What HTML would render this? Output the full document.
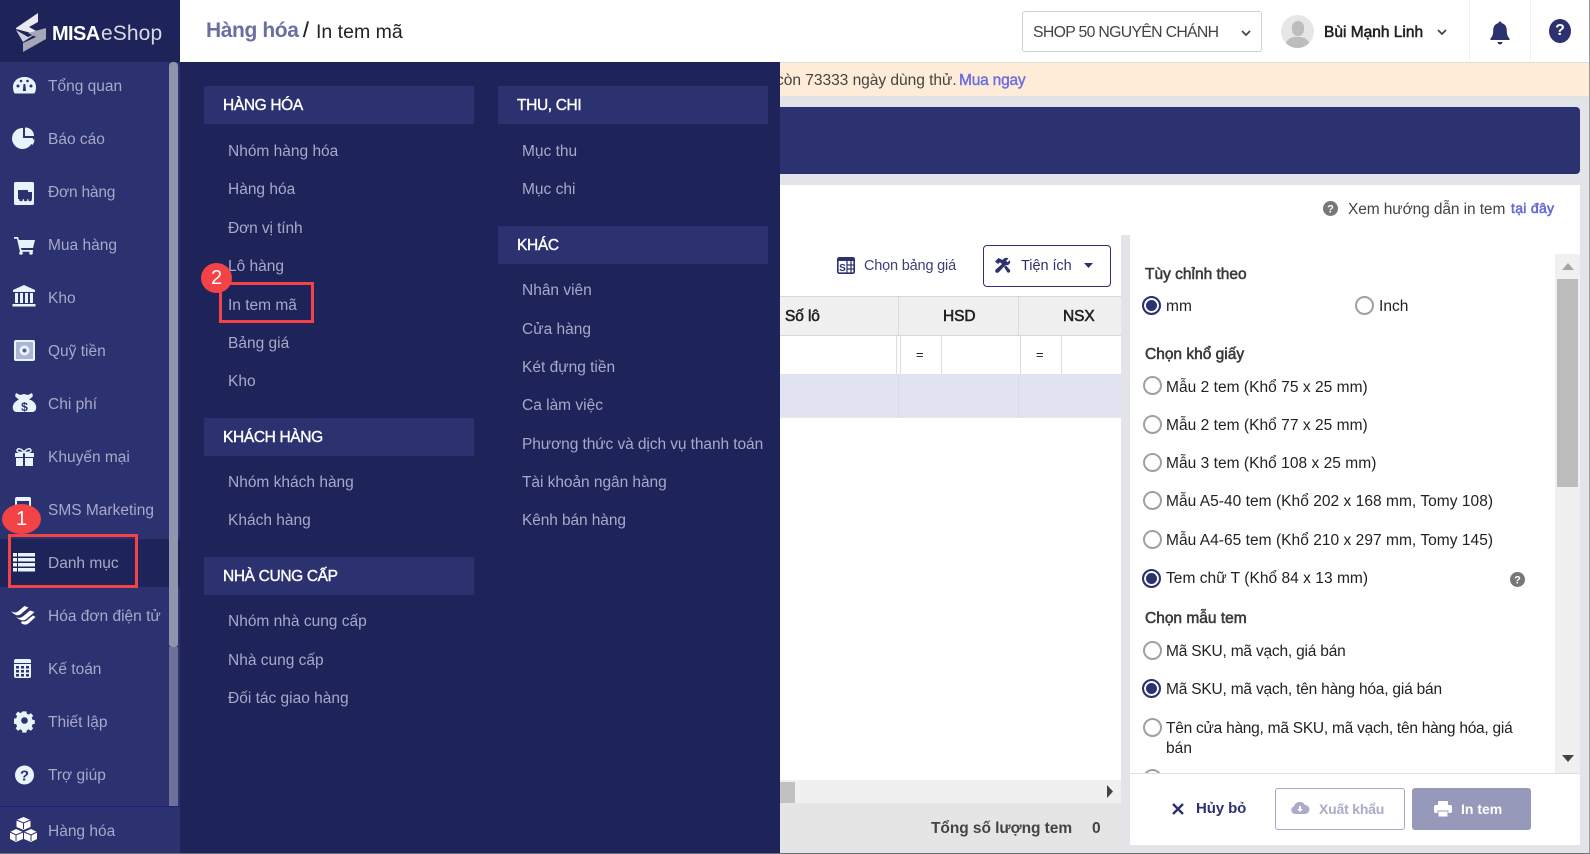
<!DOCTYPE html>
<html lang="vi">
<head>
<meta charset="utf-8">
<title>In tem mã</title>
<style>
html,body{margin:0;padding:0;width:1590px;height:854px;overflow:hidden;background:#e3e4ea}
body{position:relative;font-family:"Liberation Sans","Noto Sans CJK SC",sans-serif;font-size:15.5px;color:#222}
.b{position:absolute}
.t{position:absolute;white-space:nowrap;line-height:20px;height:20px;margin-top:2px}
.m{-webkit-text-stroke:.55px currentColor}
.s{color:#a7a9c9;left:48px;font-size:15.5px}
.p{color:#a7a9c9;font-size:15.5px}
.h{position:absolute;background:#2c3170;width:270px;height:38px}
.hd{color:#fff;font-size:15.5px;-webkit-text-stroke:.4px #fff;letter-spacing:-.35px}
.r{position:absolute;box-sizing:border-box;width:19px;height:19px;border-radius:50%;border:2px solid #a0a0a0;background:#fff;margin-top:1px}
.r.c{border-color:#2c3170;box-shadow:inset 0 0 0 2px #fff;background:#2c3170}
.f{color:#222;left:1166px;font-size:15.5px;letter-spacing:.04px}
.l{color:#3a3a3a;left:1145px;font-size:15.5px;-webkit-text-stroke:.55px #3a3a3a}
svg{position:absolute;overflow:visible}
</style>
</head>
<body>

<!-- top header -->
<div class="b" style="left:180px;top:0;width:1410px;height:62px;background:#fff;border-bottom:1px solid #dcdcdc"></div>
<div class="t" style="left:206px;top:18px;font-size:21px;color:#6a6fa2;line-height:22px;font-weight:700;letter-spacing:-.4px">Hàng hóa</div>
<div class="t" style="left:303px;top:18px;font-size:21px;color:#222;line-height:22px;-webkit-text-stroke:.3px #222">/</div>
<div class="t" style="left:316px;top:19px;font-size:19.5px;color:#222;line-height:22px">In tem mã</div>

<div class="b" style="left:1022px;top:11px;width:240px;height:41px;box-sizing:border-box;border:1px solid #cfcfcf;border-radius:3px;background:#fff"></div>
<div class="t" style="left:1033px;top:21px;font-size:15.8px;color:#444;letter-spacing:-.68px">SHOP 50 NGUYÊN CHÁNH</div>
<svg style="left:0;top:0" width="1590" height="62"><path d="M1242 31l4 4 4-4" fill="none" stroke="#444" stroke-width="1.8"/><path d="M1438 30l4 4 4-4" fill="none" stroke="#444" stroke-width="1.8"/></svg>
<div class="b" style="left:1281px;top:15px;width:33px;height:33px;border-radius:50%;background:#e6e6e6;overflow:hidden">
<div class="b" style="left:10.5px;top:6px;width:12px;height:15px;border-radius:6px;background:#bdbdbd"></div>
<div class="b" style="left:4px;top:22px;width:25px;height:16px;border-radius:10px 10px 0 0;background:#bdbdbd"></div>
</div>
<div class="t m" style="left:1324px;top:21px;font-size:15.5px;color:#222">Bùi Mạnh Linh</div>
<div class="b" style="left:1469px;top:0;width:1px;height:62px;background:#f0f0f0"></div>
<div class="b" style="left:1530px;top:0;width:1px;height:62px;background:#f0f0f0"></div>
<svg style="left:1490px;top:20px" width="20" height="27" viewBox="0 0 20 27"><path d="M10 1.500c1 0 1.600.7 1.600 1.600 3.600.8 5.200 3.600 5.200 7.400 0 4.200 1 6.200 2.700 8 .5.600.2 1.500-.7 1.500H1.200c-.9 0-1.200-.9-.7-1.500 1.700-1.800 2.700-3.800 2.700-8 0-3.800 1.600-6.600 5.200-7.400C8.400 2.200 9 1.500 10 1.500zM7.500 22h5a2.500 2.500 0 0 1-5 0z" fill="#2c3170"/></svg>
<div class="b" style="left:1549px;top:19px;width:22px;height:24px;border-radius:50%;background:#2c3170;color:#fff;text-align:center;font-weight:700;font-size:16px;line-height:24px">?</div>

<!-- banner -->
<div class="b" style="left:780px;top:63px;width:810px;height:33px;background:#feecd9;border-bottom:1px solid #e6e0da"></div>
<div class="t" style="left:776px;top:69px;font-size:15.6px;color:#444;letter-spacing:-.06px">còn 73333 ngày dùng thử.</div>
<div class="t" style="left:959px;top:69px;font-size:15.5px;color:#6c6ee0;-webkit-text-stroke:.4px #6c6ee0;letter-spacing:-.2px">Mua ngay</div>

<!-- navy bar -->
<div class="b" style="left:780px;top:107px;width:800px;height:67px;background:#2c3170;border-radius:0 4px 4px 0"></div>

<!-- content -->
<div class="b" style="left:780px;top:185px;width:800px;height:660px;background:#fff"></div>

<!-- table toolbar -->
<svg style="left:837px;top:257px" width="18" height="17" viewBox="0 0 18 17"><rect x=".8" y=".8" width="16.400" height="15.400" rx="1.500" fill="#fff" stroke="#2c3170" stroke-width="1.600"/><rect x="1" y="1" width="16" height="3" fill="#2c3170"/><path d="M10 4v12M14 4v12M10 8h7M10 12h7" stroke="#2c3170" stroke-width="1.200"/><text x="5.500" y="14" font-size="10" font-weight="700" fill="#2c3170" text-anchor="middle" font-family="Liberation Sans">S</text></svg>
<div class="t" style="left:864px;top:254px;font-size:14.5px;color:#3c4078;letter-spacing:-.18px">Chọn bảng giá</div>
<div class="b" style="left:983px;top:245px;width:128px;height:42px;box-sizing:border-box;border:1.500px solid #2c3170;border-radius:4px;background:#fff"></div>
<svg style="left:994px;top:257px" width="17" height="17" viewBox="0 0 17 17"><path d="M1 4.500L4.500 1l4 2 1.500-1.500c1.500-1 3.500-.8 4.500.2l-2.500 2 1.500 1.500 2.300-2c.8 1.500.2 3.500-1.300 4.500-1 .6-2 .6-3 .3L5 15c-1 1-2.500 1.200-3.300.3-.8-.8-.6-2.200.3-3.100L8 7 6 5.200 4 7z" fill="#2c3170"/><path d="M10 10l1.800-1.600 4 4.400c.7.900.5 1.800-.1 2.400-.6.600-1.600.7-2.400 0z" fill="#2c3170"/></svg>
<div class="t" style="left:1021px;top:254px;font-size:14.5px;color:#2c3170;letter-spacing:-.05px">Tiện ích</div>
<svg style="left:1084px;top:263px" width="10" height="6"><path d="M0 0h9L4.500 5z" fill="#2c3170"/></svg>

<!-- table -->
<div class="b" style="left:780px;top:296px;width:341px;background:#f0f0f0;border-top:1px solid #d8d8d8;border-bottom:1px solid #d8d8d8;height:38px"></div>
<div class="b" style="left:898px;top:297px;width:1px;height:121px;background:#dadada"></div>
<div class="b" style="left:1018px;top:297px;width:1px;height:121px;background:#dadada"></div>
<div class="t m" style="left:785px;top:305px;font-size:15.5px;color:#222;letter-spacing:-.1px">Số lô</div>
<div class="t m" style="left:943px;top:305px;font-size:15.5px;color:#222;letter-spacing:-.1px">HSD</div>
<div class="t m" style="left:1063px;top:305px;font-size:15.5px;color:#222;letter-spacing:-.1px">NSX</div>
<div class="b" style="left:780px;top:336px;width:341px;height:38px;background:#fff"></div>
<div class="b" style="left:896px;top:336px;width:1px;height:38px;background:#dcdcdc"></div>
<div class="b" style="left:900px;top:336px;width:1px;height:38px;background:#dcdcdc"></div>
<div class="b" style="left:941px;top:336px;width:1px;height:38px;background:#dcdcdc"></div>
<div class="b" style="left:1020px;top:336px;width:1px;height:38px;background:#dcdcdc"></div>
<div class="b" style="left:1061px;top:336px;width:1px;height:38px;background:#dcdcdc"></div>
<div class="t" style="left:916px;top:343px;font-size:13px;color:#222">=</div>
<div class="t" style="left:1036px;top:343px;font-size:13px;color:#222">=</div>
<div class="b" style="left:780px;top:374px;width:341px;height:44px;background:#e1e3f0;border-bottom:1px solid #e8e8e8;box-sizing:border-box"></div>
<div class="b" style="left:898px;top:374px;width:1px;height:44px;background:#d8dae6"></div>
<div class="b" style="left:1018px;top:374px;width:1px;height:44px;background:#d8dae6"></div>

<!-- scroll h -->
<div class="b" style="left:780px;top:780px;width:341px;height:23px;background:#f0f0f0"></div>
<div class="b" style="left:780px;top:782px;width:15px;height:21px;background:#c1c1c1"></div>
<svg style="left:1106px;top:785px" width="8" height="13"><path d="M1 0l6 6.500L1 13z" fill="#444"/></svg>
<div class="b" style="left:780px;top:803px;width:341px;height:42px;background:#e5e5e5"></div>
<div class="t" style="left:931px;top:817px;font-size:15.5px;color:#444;font-weight:700;letter-spacing:-.05px">Tổng số lượng tem</div>
<div class="t" style="left:1092px;top:817px;font-size:15.5px;color:#444;font-weight:700">0</div>

<!-- gutter -->
<div class="b" style="left:1121px;top:235px;width:9px;height:610px;background:#e3e4ea"></div>

<!-- right panel -->
<div class="b" style="left:1130px;top:185px;width:450px;height:660px;background:#fff"></div>
<svg style="left:1323px;top:201px" width="15" height="15" viewBox="0 0 15 15"><circle cx="7.500" cy="7.500" r="7.500" fill="#777"/><text x="7.500" y="11.500" font-size="11" font-weight="700" fill="#fff" text-anchor="middle" font-family="Liberation Sans">?</text></svg>
<div class="t" style="left:1348px;top:198px;font-size:15.5px;color:#444;letter-spacing:-.1px">Xem hướng dẫn in tem</div>
<div class="t m" style="left:1511px;top:196px;font-size:14px;color:#6366d8;letter-spacing:.3px">tại đây</div>

<div class="t l" style="top:263px">Tùy chỉnh theo</div>
<div class="r c" style="left:1142px;top:295px"></div>
<div class="t f" style="top:295px">mm</div>
<div class="r" style="left:1355px;top:295px"></div>
<div class="t f" style="left:1379px;top:295px">Inch</div>

<div class="t l" style="top:343px">Chọn khổ giấy</div>
<div class="r" style="left:1143px;top:375px"></div><div class="t f" style="top:376px">Mẫu 2 tem (Khổ 75 x 25 mm)</div>
<div class="r" style="left:1143px;top:414px"></div><div class="t f" style="top:414px">Mẫu 2 tem (Khổ 77 x 25 mm)</div>
<div class="r" style="left:1143px;top:452px"></div><div class="t f" style="top:452px">Mẫu 3 tem (Khổ 108 x 25 mm)</div>
<div class="r" style="left:1143px;top:490px"></div><div class="t f" style="top:490px">Mẫu A5-40 tem (Khổ 202 x 168 mm, Tomy 108)</div>
<div class="r" style="left:1143px;top:529px"></div><div class="t f" style="top:529px">Mẫu A4-65 tem (Khổ 210 x 297 mm, Tomy 145)</div>
<div class="r c" style="left:1142px;top:568px"></div><div class="t f" style="top:567px">Tem chữ T (Khổ 84 x 13 mm)</div>
<svg style="left:1510px;top:572px" width="15" height="15" viewBox="0 0 15 15"><circle cx="7.500" cy="7.500" r="7.500" fill="#777"/><text x="7.500" y="11.500" font-size="11" font-weight="700" fill="#fff" text-anchor="middle" font-family="Liberation Sans">?</text></svg>

<div class="t l" style="top:607px">Chọn mẫu tem</div>
<div class="r" style="left:1143px;top:640px"></div><div class="t f" style="top:640px;letter-spacing:-.2px">Mã SKU, mã vạch, giá bán</div>
<div class="r c" style="left:1142px;top:678px"></div><div class="t f" style="top:678px;letter-spacing:-.2px">Mã SKU, mã vạch, tên hàng hóa, giá bán</div>
<div class="r" style="left:1143px;top:717px"></div><div class="t f" style="top:717px;letter-spacing:-.25px">Tên cửa hàng, mã SKU, mã vạch, tên hàng hóa, giá</div>
<div class="t f" style="top:737px">bán</div>
<div class="r" style="left:1143px;top:768px"></div>

<!-- right scrollbar -->
<div class="b" style="left:1555px;top:254px;width:25px;height:519px;background:#f0f0f0"></div>
<div class="b" style="left:1557px;top:279px;width:21px;height:208px;background:#bcbcbc"></div>
<svg style="left:1562px;top:263px" width="12" height="7"><path d="M0 7L6 0l6 7z" fill="#a5a5a5"/></svg>
<svg style="left:1562px;top:755px" width="12" height="7"><path d="M0 0h12L6 7z" fill="#444"/></svg>

<!-- footer -->
<div class="b" style="left:1130px;top:773px;width:450px;height:72px;background:#fff;border-top:1px solid #e0e0e0;box-sizing:border-box"></div>
<svg style="left:1171px;top:802px" width="14" height="14"><path d="M2 2l10 10M12 2L2 12" stroke="#2c3170" stroke-width="2.400"/></svg>
<div class="t" style="left:1196px;top:797px;font-size:15px;color:#2c3170;font-weight:700;letter-spacing:-.1px">Hủy bỏ</div>
<div class="b" style="left:1275px;top:788px;width:130px;height:42px;box-sizing:border-box;border:1.500px solid #a6a8c6;border-radius:3px;background:#fff"></div>
<svg style="left:1291px;top:801px" width="18" height="14" viewBox="0 0 18 14"><path d="M4 13a4 4 0 0 1-1-7.800A6 6 0 0 1 14 4a4.500 4.500 0 0 1 0 9z" fill="#a9abc8"/><path d="M8 5h2v3h2l-3 3-3-3h2z" fill="#fff"/></svg>
<div class="t" style="left:1319px;top:797px;font-size:14px;color:#a9abc8;font-weight:700;letter-spacing:-.2px">Xuất khẩu</div>
<div class="b" style="left:1412px;top:788px;width:119px;height:42px;border-radius:3px;background:#9799bb"></div>
<svg style="left:1434px;top:801px" width="18" height="17" viewBox="0 0 18 17"><rect x="4" y="0" width="10" height="5" rx="1" fill="#fff"/><rect x="0" y="4" width="18" height="8" rx="2" fill="#fff"/><rect x="4" y="10" width="10" height="6" fill="#fff" stroke="#9799bb"/></svg>
<div class="t" style="left:1461px;top:797px;font-size:14px;color:#fff;font-weight:700">In tem</div>

<!-- mega menu -->
<div class="b" style="left:180px;top:62px;width:600px;height:792px;background:#1e2459"></div>
<div class="h" style="left:204px;top:86px"></div>
<div class="h" style="left:204px;top:418px"></div>
<div class="h" style="left:204px;top:557px"></div>
<div class="h" style="left:498px;top:86px"></div>
<div class="h" style="left:498px;top:226px"></div>
<div class="t hd" style="left:223px;top:94px">HÀNG HÓA</div>
<div class="t hd" style="left:223px;top:426px">KHÁCH HÀNG</div>
<div class="t hd" style="left:223px;top:565px">NHÀ CUNG CẤP</div>
<div class="t hd" style="left:517px;top:94px">THU, CHI</div>
<div class="t hd" style="left:517px;top:234px">KHÁC</div>

<div class="t p" style="left:228px;top:140px">Nhóm hàng hóa</div>
<div class="t p" style="left:228px;top:178px">Hàng hóa</div>
<div class="t p" style="left:228px;top:217px;letter-spacing:-.1px">Đơn vị tính</div>
<div class="t p" style="left:228px;top:255px">Lô hàng</div>
<div class="t p" style="left:228px;top:294px">In tem mã</div>
<div class="t p" style="left:228px;top:332px">Bảng giá</div>
<div class="t p" style="left:228px;top:370px">Kho</div>
<div class="t p" style="left:228px;top:471px">Nhóm khách hàng</div>
<div class="t p" style="left:228px;top:509px">Khách hàng</div>
<div class="t p" style="left:228px;top:610px">Nhóm nhà cung cấp</div>
<div class="t p" style="left:228px;top:649px">Nhà cung cấp</div>
<div class="t p" style="left:228px;top:687px">Đối tác giao hàng</div>

<div class="t p" style="left:522px;top:140px">Mục thu</div>
<div class="t p" style="left:522px;top:178px">Mục chi</div>
<div class="t p" style="left:522px;top:279px">Nhân viên</div>
<div class="t p" style="left:522px;top:318px">Cửa hàng</div>
<div class="t p" style="left:522px;top:356px">Két đựng tiền</div>
<div class="t p" style="left:522px;top:394px">Ca làm việc</div>
<div class="t p" style="left:522px;top:433px;letter-spacing:-.08px">Phương thức và dịch vụ thanh toán</div>
<div class="t p" style="left:522px;top:471px;letter-spacing:-.05px">Tài khoản ngân hàng</div>
<div class="t p" style="left:522px;top:509px;letter-spacing:-.1px">Kênh bán hàng</div>

<!-- red box 2 -->
<div class="b" style="left:219px;top:282px;width:95px;height:41px;box-sizing:border-box;border:3px solid #f44347"></div>
<div class="b" style="left:201px;top:263px;width:31px;height:30px;border-radius:50%;background:#f44347;color:#fff;text-align:center;font-size:20px;line-height:31px">2</div>

<!-- sidebar -->
<div class="b" style="left:0;top:0;width:180px;height:854px;background:#2c3170"></div>
<div class="b" style="left:0;top:0;width:180px;height:62px;background:#1e2459"></div>
<svg style="left:0;top:0" width="60" height="62" viewBox="0 0 60 62"><path d="M16 28L38 13v9l-9 5 9 5-3 2-19-5z" fill="#e9e9ef"/><path d="M16 30l12 7 9-4-14 9z" fill="#cfcfdb"/><path d="M46 28v11L23 52v-9l13-6-8-4z" fill="#a5a6b8"/></svg>
<div class="t" style="left:52px;top:20px;font-size:20px;color:#fff;font-weight:700;letter-spacing:-.6px;line-height:24px">MISA</div>
<div class="t" style="left:101px;top:20px;font-size:21px;color:#d8d9e4;letter-spacing:.1px;line-height:24px">eShop</div>

<div class="b" style="left:0;top:539px;width:180px;height:48px;background:#1e2459"></div>

<!-- sidebar scrollbar -->
<div class="b" style="left:169px;top:62px;width:9px;height:585px;background:#9293ad;border-radius:4px 4px 3px 3px"></div>
<div class="b" style="left:169px;top:647px;width:9px;height:160px;background:#6f7199"></div>
<div class="b" style="left:0;top:806px;width:180px;height:1px;background:#221d86"></div>

<div class="t s" style="top:75px">Tổng quan</div>
<div class="t s" style="top:128px">Báo cáo</div>
<div class="t s" style="top:181px;letter-spacing:-.2px">Đơn hàng</div>
<div class="t s" style="top:234px">Mua hàng</div>
<div class="t s" style="top:287px">Kho</div>
<div class="t s" style="top:340px">Quỹ tiền</div>
<div class="t s" style="top:393px">Chi phí</div>
<div class="t s" style="top:446px">Khuyến mại</div>
<div class="t s" style="top:499px">SMS Marketing</div>
<div class="t s" style="top:552px">Danh mục</div>
<div class="t s" style="top:605px">Hóa đơn điện tử</div>
<div class="t s" style="top:658px">Kế toán</div>
<div class="t s" style="top:711px">Thiết lập</div>
<div class="t s" style="top:764px">Trợ giúp</div>
<div class="t s" style="top:820px">Hàng hóa</div>

<!-- sidebar icons -->
<svg style="left:0;top:0" width="48" height="854" viewBox="0 0 48 854" fill="#e7f4fc">
<!-- gauge -->
<path d="M13 87c0-6 5-10 11.500-10S36 81 36 87c0 3-.8 6-2 6.500H15c-1.200-.5-2-3.500-2-6.500z"/>
<g fill="#2c3170"><circle cx="18" cy="86" r="1.500"/><circle cx="21" cy="81" r="1.300"/><circle cx="27.500" cy="81" r="1.300"/><circle cx="31" cy="86" r="1.500"/><path d="M23.500 84h1.800l.7 7h-3.200z"/></g>
<!-- pie -->
<path d="M23 128v10h10a10.500 10.500 0 1 1-10-10z"/><path d="M25 127.500a8.500 8.500 0 0 1 9 8.500h-9z"/><path d="M27 139.500h7.500a10 10 0 0 1-2 5.500z"/>
<!-- order -->
<rect x="14" y="182" width="20" height="23" rx="1.500"/>
<g fill="#2c3170"><rect x="18" y="190" width="10" height="9"/><path d="M28 192h4v7h-4z"/><circle cx="21" cy="199.500" r="1.800"/><circle cx="25.500" cy="199.500" r="1.800"/><circle cx="30" cy="199.500" r="1.800"/></g>
<!-- cart -->
<path d="M14 237h4l1 3h16l-2 8H21l.5 2H33v1.800H20L17 238.800h-3z"/><circle cx="21" cy="253" r="1.800"/><circle cx="31" cy="253" r="1.800"/>
<!-- bank -->
<path d="M24 285l11 5v2H13v-2z"/><rect x="15" y="293" width="3" height="10"/><rect x="20" y="293" width="3" height="10"/><rect x="25" y="293" width="3" height="10"/><rect x="30" y="293" width="3" height="10"/><rect x="12.500" y="304" width="23" height="2.500"/>
<!-- safe -->
<rect x="14" y="340" width="21" height="21" rx="2"/><rect x="16" y="342" width="17" height="17" fill="#aeb4d6"/><circle cx="24.500" cy="350.500" r="5" fill="#e7f4fc"/><circle cx="24.500" cy="350.500" r="2" fill="#5a5f95"/>
<!-- money bag -->
<path d="M16 393l4 2 4-1 4 1 4-2 1 3-4 4h-10l-4-4zM18 400h13c4 2 6 6 5 9-.5 2-2 3-4 3H17c-2 0-3.500-1-4-3-1-3 1-7 5-9z"/>
<text x="24.500" y="411" font-size="12" font-weight="700" fill="#2c3170" text-anchor="middle" font-family="Liberation Sans">$</text>
<!-- gift -->
<path d="M15 453h8v4h-8zM25 453h9v4h-9zM16 458h7v8h-7zM25 458h8v8h-8z"/><path d="M24 452c-3-4-7-4-7-1.500 0 1.500 2 2 7 2zM24 452c3-4 7-4 7-1.500 0 1.500-2 2-7 2z" fill="none" stroke="#e7f4fc" stroke-width="1.500"/>
<!-- sms -->
<rect x="15" y="497" width="16" height="22" rx="2"/><rect x="17" y="501" width="12" height="13" fill="#2c3170"/>
<!-- list -->
<path d="M18 553h17v3.500H18zM18 558h17v3.500H18zM18 563h17v3.500H18zM18 568h17v3.500H18zM13 553h4v3.500h-4zM13 558h4v3.500h-4zM13 563h4v3.500h-4zM13 568h4v3.500h-4z"/>
<!-- einvoice -->
<path fill="#fff" d="M11 611c3 2 5 2 7.500 0l6-5 4 1.500-7.500 6.500c-2.500 2-6 2-10 -3zM16 617c3 1.500 5 1 7.500-1l6.500-5.500 4.500 1.500-8 7c-2.500 2-6 2-10.500-2zM22 621c2 1 4 .5 6-1.500l5-4 2.500 1.500-6 5.500c-2.500 2.500-5 3-8.500.5z"/>
<!-- calc -->
<path d="M16 659h13a2 2 0 0 1 2 2v15a2 2 0 0 1-2 2H16a2 2 0 0 1-2-2v-15a2 2 0 0 1 2-2z"/>
<g fill="#2c3170"><rect x="14" y="663" width="17" height="1"/><rect x="16" y="666" width="3" height="2.500"/><rect x="21" y="666" width="3" height="2.500"/><rect x="26" y="666" width="3" height="2.500"/><rect x="16" y="670" width="3" height="2.500"/><rect x="21" y="670" width="3" height="2.500"/><rect x="26" y="670" width="3" height="2.500"/><rect x="16" y="674" width="3" height="2.500"/><rect x="21" y="674" width="3" height="2.500"/><rect x="26" y="674" width="3" height="2.500"/></g>
<!-- gear -->
<path d="M22 712h5l.5 3 2.500 1 2.500-1.800 3 3.300-1.800 2.300 1 2.700 2.800.5v4.500l-2.800.5-1 2.700 1.800 2.300-3 3.300-2.500-1.800-2.500 1-.5 3h-5l-.5-3-2.500-1-2.500 1.800-3-3.300 1.800-2.300-1-2.700-2.800-.5V721l2.800-.5 1-2.700-1.800-2.300 3-3.300 2.500 1.800 2.500-1z" transform="translate(4.800 141.800) scale(.8)"/><circle cx="24.500" cy="720.500" r="3.300" fill="#2c3170"/>
<!-- help -->
<circle cx="24.500" cy="775" r="9.500"/>
<text x="24.500" y="780.500" font-size="15" font-weight="700" fill="#2c3170" text-anchor="middle" font-family="Liberation Sans">?</text>
<!-- cubes -->
<path d="M23.500 817l7 3v7l-7 3-7-3v-7zM16 829l7 3v7l-7 3-6-3v-7zM31 829l6 3v7l-6 3-7-3v-7z" fill="#fff"/>
<path d="M16.500 820l7 3 7-3M23.500 823v6M10 832l6 3 7-3M16 835v6M24 832l7 3 6-3M31 835v6" fill="none" stroke="#2c3170" stroke-width="1"/>
</svg>

<!-- red box 1 -->
<div class="b" style="left:8px;top:534px;width:130px;height:54px;box-sizing:border-box;border:3px solid #f44347"></div>
<div class="b" style="left:2px;top:504px;width:39px;height:30px;border-radius:50%;background:#f44347;color:#fff;text-align:center;font-size:20px;line-height:31px">1</div>

<!-- right + bottom border -->
<div class="b" style="left:1589px;top:0;width:1px;height:854px;background:#9a9a9a"></div>
<div class="b" style="left:0;top:853px;width:1590px;height:1px;background:#6e6e6e"></div>
</body>
</html>
